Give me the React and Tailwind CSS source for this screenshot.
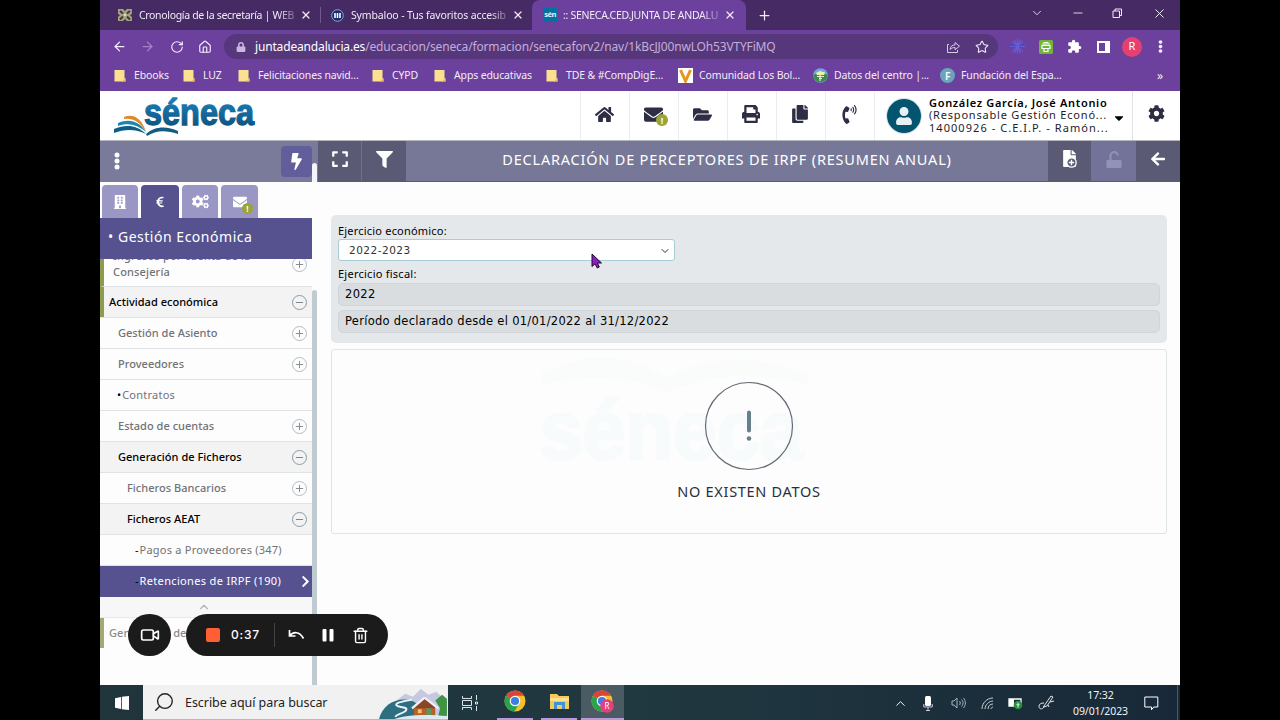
import React, { useState } from 'react';
import clsx from 'clsx';
import {
  FaHome,
  FaEnvelope,
  FaFolderOpen,
  FaPrint,
  FaCopy,
  FaPhoneVolume,
  FaUser,
  FaCog,
  FaCogs,
  FaBolt,
  FaExpand,
  FaFilter,
  FaEuroSign,
  FaBuilding,
  FaEllipsisV,
  FaArrowLeft,
  FaCaretDown,
  FaFile,
  FaLock,
  FaChevronRight,
} from 'react-icons/fa';
import { MdExtension } from 'react-icons/md';
import {
  ArrowLeft,
  ArrowRight,
  RotateCw,
  House,
  X,
  Plus,
  Minus,
  Star,
  ChevronDown,
  ChevronUp,
  Video,
  Trash2,
  Search,
} from 'lucide-react';

const BOOKMARKS = [
  { name: 'Ebooks', icon: 'folder', width: 'w-[69px]' },
  { name: 'LUZ', icon: 'folder', width: 'w-[55px]' },
  { name: 'Felicitaciones navid...', icon: 'folder', width: 'w-[134px]' },
  { name: 'CYPD', icon: 'folder', width: 'w-[62px]' },
  { name: 'Apps educativas', icon: 'folder', width: 'w-[112px]' },
  { name: 'TDE & #CompDigE...', icon: 'folder', width: 'w-[132px]' },
  { name: 'Comunidad Los Bol...', icon: 'v', width: 'w-[135px]' },
  { name: 'Datos del centro |...', icon: 'globe', width: 'w-[127px]' },
  { name: 'Fundación del Espa...', icon: 'f', width: 'w-[140px]' },
];

const MENU = [
  { label: 'Actividad económica', toggle: 'minus', pad: 'pl-[9px]', open: true, stripe: true },
  { label: 'Gestión de Asiento', toggle: 'plus', pad: 'pl-[18px]' },
  { label: 'Proveedores', toggle: 'plus', pad: 'pl-[18px]' },
  { label: 'Contratos', mark: '•', pad: 'pl-[17px]' },
  { label: 'Estado de cuentas', toggle: 'plus', pad: 'pl-[18px]' },
  { label: 'Generación de Ficheros', toggle: 'minus', pad: 'pl-[18px]', open: true },
  { label: 'Ficheros Bancarios', toggle: 'plus', pad: 'pl-[27px]' },
  { label: 'Ficheros AEAT', toggle: 'minus', pad: 'pl-[27px]', open: true },
  { label: 'Pagos a Proveedores (347)', mark: '-', pad: 'pl-[35px]' },
  { label: 'Retenciones de IRPF (190)', mark: '-', pad: 'pl-[35px]', active: true },
];

const HEADER_ICONS = [FaHome, FaEnvelope, FaFolderOpen, FaPrint, FaCopy, FaPhoneVolume];

function BookmarkIcon({ type }) {
  if (type === 'v') {
    return (
      <svg width="15" height="15" viewBox="0 0 15 15" className="shrink-0">
        <rect width="15" height="15" fill="#fff" />
        <path d="M2.5 2l5 11 5-11" fill="none" stroke="#e8951c" strokeWidth="3" />
      </svg>
    );
  }
  if (type === 'globe') {
    return (
      <svg width="15" height="15" viewBox="0 0 15 15" className="shrink-0">
        <circle cx="7.5" cy="7.5" r="7.3" fill="#6fa9dc" />
        <path d="M0.5 7c2-2 4 0 7 0s5-2 7 0c0 4-3 7-7 7.3C3.5 14 .5 11 .5 7z" fill="#3d8a45" />
        <path d="M3 5l4-2 5 1.5-1 2.5H4z" fill="#eef3a4" />
        <path d="M4 8.500h7M6 10.500h3M7 7v6" stroke="#e8f0e0" strokeWidth="1.2" />
      </svg>
    );
  }
  if (type === 'f') {
    return (
      <span className="flex h-[15px] w-[15px] shrink-0 items-center justify-center rounded-full bg-[#6aa5bd] text-[10px] leading-none font-semibold text-white">
        F
      </span>
    );
  }
  return (
    <svg width="12" height="13" viewBox="0 0 12 13" className="shrink-0">
      <path d="M0.5 1h10v8l1 1v2.5h-11z" fill="#fbe092" />
      <path d="M8 12.5l3.5-3.5v3.5z" fill="#e9b949" />
    </svg>
  );
}

function BrowserTabs() {
  return (
    <div className="flex h-[30px] bg-[#452a63] text-[10.5px] text-[#f1eaf7]">
      <div className="flex w-[221px] items-center pl-[17px]">
        <svg width="16" height="14" viewBox="0 0 16 14">
          <path d="M1 1h5l2 2 2-2h5v5l-2 1 2 2v4h-5l-2-2-2 2H1V9l2-2-2-1z" fill="#a5a184" />
          <path d="M3 3l3 2.5M13 3l-3 2.5M3 11.5l3-3M13 11.5l-3-3" stroke="#3d3b33" strokeWidth="2" />
          <circle cx="8" cy="7" r="1.3" fill="#ddd9bd" />
        </svg>
        <span className="mt-px ml-1.5 w-[158px] whitespace-nowrap tracking-[-0.32px] [mask-image:linear-gradient(to_right,#000_88%,#0004)]">
          Cronología de la secretaría | WEB
        </span>
        <X size={12} strokeWidth={2.5} className="ml-1" />
        <span className="ml-[8px] h-4 w-px bg-[#705a8c]" />
      </div>
      <div className="flex w-[311px] items-center">
        <svg width="13" height="13" viewBox="0 0 13 13" className="ml-[10px] shrink-0">
          <circle cx="6.5" cy="6.5" r="5.8" fill="#1d2a63" stroke="#8ea3df" />
          <path d="M4 4v5M6.5 4v5M9 4v5" stroke="#fff" strokeWidth="1.6" />
        </svg>
        <span className="mt-px ml-[7px] w-[157px] shrink-0 whitespace-nowrap tracking-[-0.14px] [mask-image:linear-gradient(to_right,#000_88%,#0004)]">
          Symbaloo - Tus favoritos accesib
        </span>
        <X size={12} strokeWidth={2.5} className="ml-[4px] shrink-0" />
        <div className="-mr-[312px] ml-[8px] flex h-full w-[214px] shrink-0 items-center rounded-t-lg bg-[#6c409d]">
          <span className="ml-[11px] flex h-[14px] w-[14px] shrink-0 items-center justify-center bg-[#04719f] text-[7.5px] leading-none font-bold tracking-[-0.5px]">
            sén
          </span>
          <span className="mt-px ml-[6px] w-[157px] whitespace-nowrap tracking-[-0.28px] [mask-image:linear-gradient(to_right,#000_88%,#0004)]">
            :: SENECA.CED.JUNTA DE ANDALU
          </span>
          <X size={12} strokeWidth={2.5} className="ml-[4px] shrink-0" />
        </div>
      </div>
      <div className="flex flex-1 items-center">
        <Plus size={15} className="ml-[125px]" />
        <div className="-mt-1 ml-auto flex items-center">
          <ChevronDown size={14} strokeWidth={1.5} className="mr-[27px]" />
          <Minus size={14} strokeWidth={1.5} className="mr-[27px]" />
          <svg width="11" height="11" viewBox="0 0 11 11" fill="none" stroke="currentColor" className="mr-[29px]">
            <path d="M1 3h6.5v6.5H1zM3 3V1h6.5v6.5h-2" />
          </svg>
          <X size={15} strokeWidth={1.6} className="mr-[13px]" />
        </div>
      </div>
    </div>
  );
}

function AddressBar() {
  return (
    <div className="flex h-8 items-center bg-[#6c409d] pt-px text-[#f3ecfa]">
      <ArrowLeft size={15} className="ml-[12px]" />
      <ArrowRight size={15} className="ml-[13px] text-[#a583c9]" />
      <RotateCw size={14} className="ml-[15px]" />
      <House size={14} className="ml-[14px]" />
      <div className="ml-[12px] flex h-[25px] w-[774px] items-center rounded-full bg-[#56377b]">
        <FaLock size={10} className="ml-[12px] text-[#c9b7dd]" />
        <span className="ml-[9px] text-[12px] tracking-[-0.16px] whitespace-nowrap text-[#c3aedb]">
          <span className="text-white">juntadeandalucia.es</span>
          /educacion/seneca/formacion/senecaforv2/nav/1kBcJJ00nwLOh53VTYFiMQ
        </span>
        <svg width="15" height="14" viewBox="0 0 15 14" fill="none" stroke="#d8c8e8" className="ml-auto">
          <path d="M3 4.5H1.5v8h10V10M4 9.5c.3-3 2-4.5 5-4.6V2.5l4.5 3.7L9 9.7V7.5c-2 0-3.8.5-5 2z" />
        </svg>
        <Star size={14} strokeWidth={1.8} className="mr-[9px] ml-[14px]" />
      </div>
      <svg width="15" height="15" viewBox="0 0 15 15" className="ml-[12px]" stroke="#5f5fdd" strokeWidth="1.2">
        <path d="M7.5 0v15M0 7.5h15M2.2 2.2l10.6 10.6M12.8 2.2L2.2 12.8M4.5.7l6 13.6M10.5.7l-6 13.6" />
      </svg>
      <svg width="14" height="14" viewBox="0 0 14 14" className="ml-[14px]">
        <rect width="14" height="14" rx="1.5" fill="#72b43a" />
        <path d="M3 4h8M4.5 2.5h5M3 5.5h8v3H3zM5 8v3.5h4V8" fill="none" stroke="#fff" strokeWidth="1.2" />
      </svg>
      <MdExtension size={15} className="ml-[14px] text-white" />
      <svg width="13" height="12" viewBox="0 0 13 12" className="ml-[15px]">
        <path d="M1 1h11v10H1z" fill="none" stroke="#fff" strokeWidth="2" />
        <path d="M8 1h4v10H8z" fill="#fff" />
      </svg>
      <span className="ml-[12px] flex h-5 w-5 items-center justify-center rounded-full bg-[#e5406f] text-[11px] text-white">
        R
      </span>
      <FaEllipsisV size={13} className="ml-[12px]" />
    </div>
  );
}

function BookmarksBar() {
  return (
    <div className="flex h-[29px] items-center bg-[#6c409d] pb-[2px] pl-[14px] text-[10.5px] text-[#f3ecfa]">
      {BOOKMARKS.map((b) => (
        <div
          key={b.name}
          className={clsx(
            'flex shrink-0 items-center whitespace-nowrap tracking-[-0.14px]',
            b.icon === 'folder' ? 'gap-2' : 'gap-1.5',
            b.width
          )}
        >
          <BookmarkIcon type={b.icon} />
          <span>{b.name}</span>
        </div>
      ))}
      <span className="mr-[17px] ml-auto text-[12px]">»</span>
    </div>
  );
}

function SenecaLogo() {
  return (
    <svg width="144" height="42" viewBox="0 0 144 42" className="overflow-visible">
      <defs>
        <linearGradient id="logo" x1="0" y1="0" x2="0" y2="1">
          <stop offset="0.2" stopColor="#1a7db5" />
          <stop offset="1" stopColor="#0b4a74" />
        </linearGradient>
      </defs>
      <path d="M11 22c10-4 18 2 22 15C27 27 20 23 11 24z" fill="#e08a2a" />
      <path d="M5 28c12-5 22-1 28 9C25 30 15 27 5 31z" fill="#1b86b4" />
      <path d="M1 34c12-5 23-4 32 5C23 34 12 34 1 38z" fill="#0f5c86" />
      <path d="M33 39c9-8 21-8 32-3v3c-12-4-22-4-31 2z" fill="#125b84" />
      <text x="31" y="30" fontSize="37" fontWeight="700" textLength="110" lengthAdjust="spacingAndGlyphs" fill="url(#logo)" stroke="url(#logo)" strokeWidth="1.3" className="font-['Liberation_Sans',sans-serif]">
        séneca
      </text>
    </svg>
  );
}

function Badge({ children, className }) {
  return (
    <span className={clsx('absolute flex items-center justify-center rounded-full bg-[#9aa437] leading-none font-bold text-white', className)}>
      {children}
    </span>
  );
}

function AppHeader() {
  return (
    <header className="flex h-[49px] bg-white text-[#2d2d44]">
      <div className="w-[480px] pt-[4px] pl-[13px]">
        <SenecaLogo />
      </div>
      {HEADER_ICONS.map((Icon, i) => (
        <div key={i} className="relative flex w-[49px] items-center justify-center border-l border-[#ececf0] pr-[2px] pb-[3px]">
          <Icon size={i === 3 || i === 4 ? 18 : 19} />
          {i === 1 && <Badge className="top-[23px] left-[26px] h-3 w-3 text-[9px]">!</Badge>}
        </div>
      ))}
      <div className="flex w-[258px] items-center border-l border-[#ececf0] pl-[11px]">
        <div className="flex h-9 w-9 shrink-0 items-center justify-center rounded-full border border-[#d3dde2] bg-white">
          <div className="flex h-[34px] w-[34px] items-center justify-center rounded-full bg-[#03556f]">
            <FaUser size={18} className="text-[#e9f0f3]" />
          </div>
        </div>
        <div className="ml-[7px] w-[182px] text-[11px] leading-[12.5px] tracking-[0.8px] whitespace-nowrap text-[#1d1d2b]">
          <p className="font-semibold tracking-[0.68px] text-black">González García, José Antonio</p>
          <p>(Responsable Gestión Econó...</p>
          <p className="tracking-[1.05px]">14000926 - C.E.I.P. - Ramón...</p>
        </div>
        <FaCaretDown size={14} className="mt-1 ml-[1px] text-black" />
      </div>
      <div className="flex flex-1 items-center justify-center border-l border-[#e2e2e8] pb-1">
        <FaCog size={17} />
      </div>
    </header>
  );
}

function Toggle({ type }) {
  return (
    <span
      className={clsx(
        'mt-px mr-[5px] ml-auto flex h-[15px] w-[15px] shrink-0 items-center justify-center rounded-full border',
        type === 'minus' ? 'border-[#8a9aa2] text-[#6d7d86]' : 'border-[#b5bcc0] text-[#7e868b]'
      )}
    >
      {type === 'minus' ? <Minus size={11} /> : <Plus size={11} />}
    </span>
  );
}

function MenuItem({ item, onSelect }) {
  return (
    <button
      type="button"
      onClick={onSelect}
      className={clsx(
        'relative flex h-[31px] w-full shrink-0 items-center border-b text-left text-[11px] whitespace-nowrap',
        item.pad,
        item.active && 'border-[#55528f] bg-[#55528f] text-white',
        item.open && 'border-[#dfe3e5] bg-[#f3f3f4] text-black',
        !item.active && !item.open && 'border-[#dfe3e5] bg-[#fdfdfe] text-[#727276]'
      )}
    >
      {item.stripe && <span className="absolute top-0 left-0 h-full w-1 bg-[#8f9a4c]" />}
      {item.mark && <span className="mr-px text-black">{item.mark}</span>}
      <span
        className={clsx(
          !item.mark && 'font-medium tracking-[0.03px]',
          item.mark && (item.active ? 'tracking-[0.34px]' : 'tracking-[0.24px]')
        )}
      >
        {item.label}
      </span>
      {item.toggle && <Toggle type={item.toggle} />}
      {item.active && <FaChevronRight size={13} className="ml-auto" />}
    </button>
  );
}

function Sidebar() {
  const [active, setActive] = useState('Retenciones de IRPF (190)');

  return (
    <div className="flex w-[218px] shrink-0 bg-[#fdfdfe]">
      <aside className="flex w-[212px] flex-col overflow-hidden">
        <div className="flex h-[41px] shrink-0 items-center bg-[#7a7a9b] pb-px text-white">
          <svg width="6" height="18" viewBox="0 0 6 18" fill="currentColor" className="ml-[14px]">
            <circle cx="3" cy="3" r="2.5" />
            <circle cx="3" cy="9" r="2.5" />
            <circle cx="3" cy="15" r="2.5" />
          </svg>
          <div className="ml-auto flex h-[31px] w-[31px] items-center justify-center rounded bg-[#625d9b]">
            <FaBolt size={17} />
          </div>
        </div>

        {/* Module tabs */}
        <div className="flex h-[36px] shrink-0 items-end gap-[3px] pl-[2px] text-white">
          <div className="flex h-[33px] w-[36px] items-center justify-center rounded-t-sm bg-[#9a97c4]">
            <FaBuilding size={14} />
          </div>
          <div className="flex h-[33px] w-[38px] items-center justify-center rounded-t-sm bg-[#55528f]">
            <FaEuroSign size={12} />
          </div>
          <div className="flex h-[33px] w-[36px] items-center justify-center rounded-t-sm bg-[#9a97c4]">
            <FaCogs size={17} />
          </div>
          <div className="relative flex h-[33px] w-[37px] items-center justify-center rounded-t-sm bg-[#9a97c4]">
            <FaEnvelope size={14} />
            <Badge className="top-[18px] left-[21px] h-[11px] w-[11px] text-[8px]">!</Badge>
          </div>
        </div>

        <h2 className="h-[41px] shrink-0 bg-[#55528f] pl-[8px] text-[14px] leading-[37px] tracking-[0.52px] text-white">
          • Gestión Económica
        </h2>

        <div className="relative h-7 shrink-0 overflow-hidden border-b border-[#dfe3e5] border-l-4 border-l-[#8f9a4c] text-[11px] text-[#727276]">
          <p className="-mt-[11px] pl-[9px] leading-[16px] font-medium tracking-[0.15px]">
            Ingresos por cuenta de la
            <br />
            Consejería
          </p>
          <div className="absolute top-[-3px] right-0">
            <Toggle type="plus" />
          </div>
        </div>

        {MENU.map((item) => (
          <MenuItem key={item.label} item={{ ...item, active: item.label === active }} onSelect={() => !item.toggle && setActive(item.label)} />
        ))}

        <div className="flex h-[21px] shrink-0 items-center justify-center border-b border-[#e6e8ea] bg-[#f7f7f8] pr-1">
          <ChevronUp size={14} className="text-[#b3b3b6]" />
        </div>
        <div className="flex h-[30px] shrink-0 items-center border-l-4 border-[#a5a873] pl-[5px] text-[11px] font-medium tracking-[0.1px] text-[#8a8a8e]">
          Generación de
        </div>
      </aside>
      {/* Scroll track */}
      <div className="flex w-[6px] flex-col">
        <div className="h-[41px] bg-[#7a7a9b] pt-[22px]">
          <div className="mr-px h-[19px] rounded-t bg-[#f4f4fa]" />
        </div>
        <div className="mt-[108px] mr-px flex-1 rounded-t bg-[#bfcbd0]" />
      </div>
    </div>
  );
}

function TitleBar() {
  return (
    <div className="flex h-[41px] bg-[#5b5a74] pb-px text-white">
      <div className="flex w-[44px] items-center justify-center border-r border-[#72718b] pb-1">
        <FaExpand size={18} />
      </div>
      <div className="flex w-[44px] items-center justify-center pb-1">
        <FaFilter size={17} />
      </div>
      <h1 className="flex w-[642px] items-center justify-center bg-[#777898] pb-[2px] text-[14.5px] tracking-[0.8px] whitespace-nowrap">
        DECLARACIÓN DE PERCEPTORES DE IRPF (RESUMEN ANUAL)
      </h1>
      <div className="flex w-[43px] items-center justify-center pb-[6px]">
        <div className="relative pr-px">
          <FaFile size={17} />
          <svg width="11" height="11" viewBox="0 0 11 11" className="absolute top-[7px] left-[5px]">
            <circle cx="5.5" cy="5.5" r="4.7" fill="#5b5a74" stroke="#fff" strokeWidth="1.3" />
            <path d="M5.5 2.8v5.4M2.8 5.5h5.4" stroke="#fff" strokeWidth="1.4" />
          </svg>
        </div>
      </div>
      <div className="flex w-[45px] items-center justify-center bg-[#73739a] pb-1">
        <svg width="16" height="17" viewBox="0 0 16 17">
          <path d="M4.5 9V5a3.7 3.7 0 0 1 7.4-.5" fill="none" stroke="#9391b5" strokeWidth="2" />
          <rect x="0.5" y="9" width="15" height="8" rx="1" fill="#9391b5" />
        </svg>
      </div>
      <div className="flex flex-1 items-center justify-center pb-1">
        <FaArrowLeft size={16} />
      </div>
    </div>
  );
}

function Watermark() {
  return (
    <svg width="272" height="132" viewBox="0 0 272 132" className="absolute top-0 left-[207px] overflow-visible">
      <path d="M2 24c45-24 85-22 126 4 42-24 90-24 140-4v10c-50-12-98-10-140 8C88 26 46 24 2 36z" fill="#fafcfb" />
      <text x="0" y="109" fontSize="84" fontWeight="700" textLength="264" lengthAdjust="spacingAndGlyphs" fill="#f8fbfb" stroke="#f8fbfb" strokeWidth="3" className="font-['Liberation_Sans',sans-serif]">
        séneca
      </text>
    </svg>
  );
}

function MainPanel() {
  return (
    <main className="flex-1 bg-[#fdfdfe]">
      <TitleBar />
      <div className="px-[13px] pt-[33px]">
        {/* Filters */}
        <section className="h-[128px] rounded-[5px] bg-[#e5e8ea] px-[7px] pt-[7px] text-black">
          <label className="block h-[17px] text-[11px] leading-[17px] tracking-[0.2px]">Ejercicio económico:</label>
          <div className="flex h-[22px] w-[337px] items-center rounded-[3px] border border-[#a9cdd6] bg-white pt-px pr-[3px] pl-[10px] font-['DejaVu_Sans',sans-serif] text-[10.5px] tracking-[0.5px] text-[#333]">
            2022-2023
            <ChevronDown size={12} className="ml-auto" />
          </div>
          <label className="mt-[4px] block h-[18px] text-[11px] leading-[18px] tracking-[0.25px]">Ejercicio fiscal:</label>
          <div className="h-[23px] w-[822px] rounded-[5px] border border-[#cfd5d8] bg-[#d9dde0] pl-[6px] font-['DejaVu_Sans',sans-serif] text-[11.5px] leading-[20px] tracking-[0.35px]">
            2022
          </div>
          <div className="mt-[4px] h-[23px] w-[822px] rounded-[5px] border border-[#cfd5d8] bg-[#d9dde0] pl-[6px] font-['DejaVu_Sans',sans-serif] text-[11.5px] leading-[20px] tracking-[0.28px]">
            Período declarado desde el 01/01/2022 al 31/12/2022
          </div>
        </section>

        {/* Empty state */}
        <section className="relative mt-[6px] flex h-[185px] flex-col items-center rounded-[3px] border border-[#dfe4e6]">
          <Watermark />
          <svg width="90" height="90" viewBox="0 0 90 90" className="relative mt-[31px]">
            <circle cx="45" cy="45" r="43.5" fill="none" stroke="#666a75" strokeWidth="1.2" />
            <path d="M45 31.5v18" stroke="#68808a" strokeWidth="4" strokeLinecap="round" />
            <circle cx="45" cy="57.5" r="2.3" fill="#68808a" />
          </svg>
          <p className="relative mt-[10px] text-[14.5px] leading-5 tracking-[0.7px] text-[#2b2f38]">NO EXISTEN DATOS</p>
        </section>
      </div>
    </main>
  );
}

function RecorderControls() {
  return (
    <div className="absolute top-[614px] left-[28px] flex gap-[15px] text-white">
      <div className="flex h-[42px] w-[43px] items-center justify-center rounded-full bg-[#1c1b1c]">
        <Video size={20} />
      </div>
      <div className="flex h-[42px] w-[202px] items-center rounded-full bg-[#1c1b1c]">
        <span className="ml-[20px] h-[14px] w-[14px] rounded-[2px] bg-[#ff5f33]" />
        <span className="ml-[11px] w-[31px] font-[Inter,sans-serif] text-[12px] font-medium tracking-[0.8px]">0:37</span>
        <span className="ml-[12px] h-6 w-px bg-[#444]" />
        <svg width="17" height="12" viewBox="0 0 17 12" fill="none" stroke="currentColor" strokeWidth="1.7" className="ml-[13px]">
          <path d="M1.5 1v6h6M1.5 7C5 2.5 11.5 2 15.5 9.5" />
        </svg>
        <svg width="12" height="13" viewBox="0 0 12 13" fill="currentColor" className="ml-[17px]">
          <rect x="0.5" width="4" height="12.5" rx="1" />
          <rect x="7.5" width="4" height="12.5" rx="1" />
        </svg>
        <Trash2 size={17} className="ml-[18px]" />
      </div>
    </div>
  );
}

function ChromeIcon({ badge }) {
  return (
    <svg width="23" height="23" viewBox="0 0 23 23">
      <circle cx="11" cy="11" r="10.5" fill="#f5c02c" />
      <path d="M11 11L1.9 5.8A10.5 10.5 0 0 1 20.1 5.8H11z" fill="#dd4437" />
      <path d="M11 11L1.9 5.8A10.5 10.5 0 0 0 10.5 21.5L15.2 13.5z" fill="#2ba24c" />
      <circle cx="11" cy="11" r="5.3" fill="#fff" />
      <circle cx="11" cy="11" r="4.1" fill="#3d7de4" />
      {badge && (
        <>
          <circle cx="16" cy="16" r="6.8" fill="#e5407c" />
          <text x="16" y="19" fontSize="8" textAnchor="middle" fill="#fff">R</text>
        </>
      )}
    </svg>
  );
}

function CabinArt() {
  return (
    <svg width="72" height="32" viewBox="0 0 72 33">
      <path d="M20 14l9-7 8 3 8-8 8 6 8-3 11 10v14H20z" fill="#c5c8de" />
      <path d="M2 33c3-12 13-20 26-20 10 0 18 6 24 20z" fill="#2d6e80" />
      <path d="M36 13c-9 2-18 3-16 6 3 3 14 1 9 6-4 3-10 3-10 6" fill="none" stroke="#eef5fa" strokeWidth="2" />
      <path d="M60 14l5 8-2 8h9V12l-5-4z" fill="#3f9343" />
      <path d="M38 20h22v10H38z" fill="#b4602f" />
      <path d="M49 12l-11 8v2h22v-2z" fill="#8a4527" />
      <path d="M49 11L36 22M49 11l14 11" stroke="#f1eef5" strokeWidth="2.5" />
      <path d="M42 23h4v4h-4z" fill="#f4c65a" />
      <path d="M51 22h5v8h-5z" fill="#5c9561" />
      <path d="M18 33c12-5 36-5 54-3v3z" fill="#dce8f2" />
    </svg>
  );
}

function Taskbar() {
  return (
    <footer className="flex h-[35px] bg-gradient-to-r from-[#20343c] via-[#203840] to-[#182838] text-white">
      <div className="flex w-[43px] items-center justify-center">
        <svg width="14" height="14" viewBox="0 0 14 14" fill="currentColor">
          <path d="M0 2.2L6 1v12l-6-1.2zM6.8.8L14 0v14l-7.2-.8z" />
        </svg>
      </div>
      <div className="flex w-[305px] items-center border-b border-[#b9b9b9] bg-[#f1f1f2] text-[#222]">
        <Search size={22} strokeWidth={1.5} className="ml-[10px] -scale-x-100" />
        <span className="mt-[3px] ml-[10px] text-[12.5px] tracking-[-0.05px] whitespace-nowrap">Escribe aquí para buscar</span>
        <div className="ml-auto self-end">
          <CabinArt />
        </div>
      </div>
      <div className="flex w-[43px] items-center justify-center">
        <svg width="17" height="16" viewBox="0 0 17 16" fill="none" stroke="#dce3e6">
          <path d="M1.5 1v2.5h9V1M1.5 5.5h9v5h-9zM1.5 15v-2.5h9V15M15.5 0v5M15.5 11v5M14.5 7h2v2h-2z" />
        </svg>
      </div>
      <div className="ml-[6px] flex w-9 items-center justify-center border-b-2 border-[#b99ad9]">
        <ChromeIcon />
      </div>
      <div className="ml-[8px] flex w-9 items-center justify-center border-b-2 border-[#b99ad9]">
        <svg width="21" height="17" viewBox="0 0 21 17">
          <path d="M1 1h7l2 2h10v13H1z" fill="#f4cb58" />
          <path d="M1 5h19v3H1z" fill="#fbe08d" />
          <path d="M5 16V9h11v7h-3v-4H8v4z" fill="#3f92d3" />
        </svg>
      </div>
      <div className="ml-[4px] flex w-[43px] items-center justify-center border-b-2 border-[#b99ad9] bg-[#4b5b64]">
        <ChromeIcon badge />
      </div>
      <div className="ml-auto flex items-center pt-px">
        <ChevronUp size={15} strokeWidth={1.5} className="mr-[15px]" />
        <svg width="10" height="15" viewBox="0 0 10 15" fill="#fff" className="mr-[18px]">
          <rect x="2" width="6" height="10" rx="1.5" />
          <path d="M.8 8v3h8.4V8M5 11v3.5M3 14.5h4" fill="none" stroke="#ccd" />
        </svg>
        <svg width="15" height="12" viewBox="0 0 15 12" fill="none" stroke="#a9b4ba" className="mr-[15px]">
          <path d="M1 4h2l3-3v10L3 8H1zM8.5 4c1 1 1 3 0 4M10.5 2.5c2 2 2 5 0 7M12.5 1c2.5 3 2.5 7 0 10" />
        </svg>
        <svg width="13" height="13" viewBox="0 0 13 13" fill="none" stroke="#c5cdd2" className="mr-[14px]">
          <path d="M1 12C1 6 6 1 12 1M4 12c0-4 4-8 8-8M7 12c0-3 2-5 5-5M10 12c0-1 1-2 2-2" />
        </svg>
        <svg width="15" height="13" viewBox="0 0 15 13" className="mr-[15px]">
          <path d="M1 2h12v7H1z" fill="none" stroke="#fff" strokeWidth="1.3" />
          <path d="M1 2h5v7H1z" fill="#fff" />
          <circle cx="10" cy="8" r="4.3" fill="#23913d" />
          <path d="M10 5.5v5M8.5 7l1.5 1.5L11.5 7" fill="none" stroke="#e5f5e8" />
        </svg>
        <svg width="17" height="16" viewBox="0 0 17 16" fill="none" stroke="#e3e7ea" className="mr-[15px]">
          <path d="M6 11L13 1l2 1-6 9-3.5 1zM6 8c-3 0-5 1-5 3.5S4 15 6 12M12 7l4-1M10 10l1 2" />
        </svg>
        <div className="w-[61px] text-center text-[10.5px] leading-[16.5px] tracking-[-0.08px] text-[#f1f3f5]">
          <div>17:32</div>
          <div>09/01/2023</div>
        </div>
        <svg width="15" height="15" viewBox="0 0 15 15" fill="none" stroke="#fff" className="mr-[18px] ml-[13px]">
          <path d="M.8 1h13v10h-4l-2.3 2.8V11H.8z" />
        </svg>
      </div>
      <span className="mr-[2px] w-px bg-[#4d5a66]" />
    </footer>
  );
}

export default function App() {
  return (
    <div className="h-[720px] w-[1280px] overflow-hidden bg-black font-['Noto_Sans',sans-serif]">
      <div className="relative mx-auto flex h-full w-[1080px] flex-col bg-white">
        <BrowserTabs />
        <AddressBar />
        <BookmarksBar />
        <AppHeader />
        <div className="flex h-[545px] overflow-hidden border-t border-[#b5b5bd]">
          <Sidebar />
          <MainPanel />
        </div>
        <Taskbar />
        <RecorderControls />
        <svg width="12" height="16" viewBox="0 0 12 16" className="absolute top-[253px] left-[491px]">
          <path d="M1 1v12.5l3-2.7 2.3 4.2 2-1-2-4H10.5z" fill="#8d1fc0" stroke="#1b0a2b" />
        </svg>
      </div>
    </div>
  );
}
